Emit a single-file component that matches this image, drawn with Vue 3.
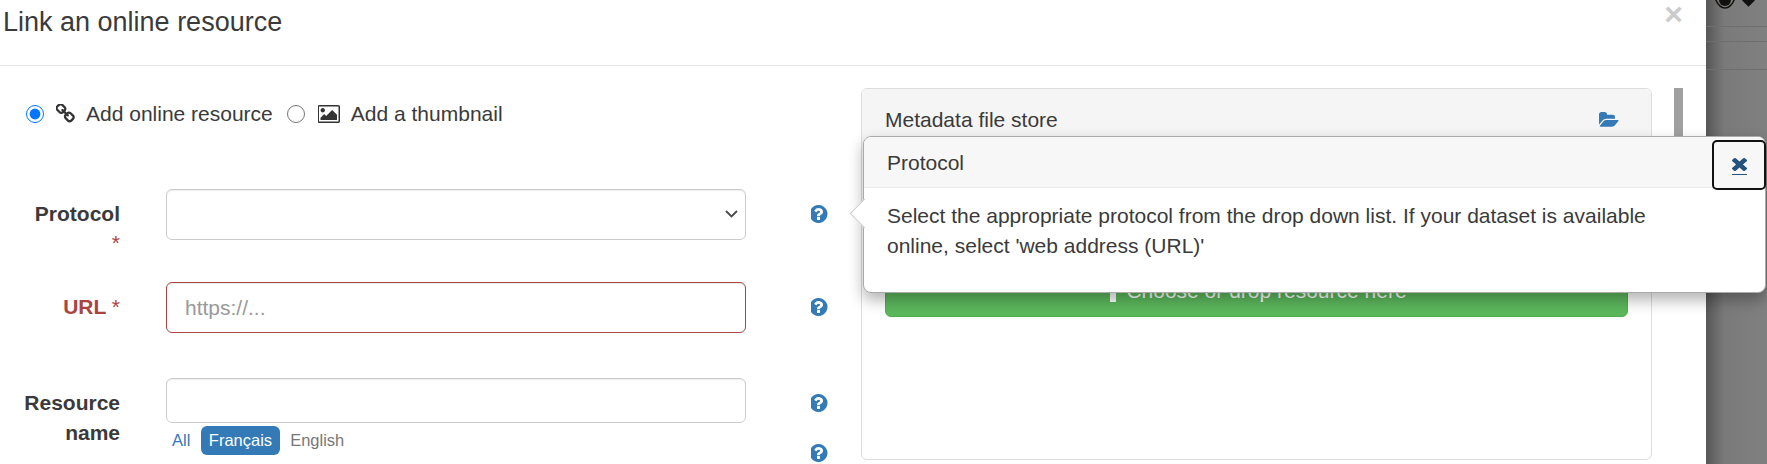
<script setup>
const help = "M896 1376v-192q0-14-9-23t-23-9h-192q-14 0-23 9t-9 23v192q0 14 9 23t23 9h192q14 0 23-9t9-23zm256-672q0-88-55.5-163t-138.5-116-170-41q-243 0-371 213-15 24 8 42l132 100q7 6 19 6 16 0 25-12 53-68 86-92 34-24 86-24 48 0 85.5 26t37.5 59q0 38-20 61t-68 45q-63 28-115.5 86.5t-52.5 125.5v36q0 14 9 23t23 9h192q14 0 23-9t9-23q0-19 21.5-49.5t54.5-49.5q32-18 49-28.5t46-35 44.5-48 28-60.5 12.5-81zm384 192q0 209-103 385.5t-279.5 279.5-385.5 103-385.5-103-279.5-279.5-103-385.5 103-385.5 279.5-279.5 385.5-103 385.5 103 279.5 279.5 103 385.5z"
</script>

<template>
  <div class="page">
    <div class="modal">
      <header class="head">
        <h4 class="title">Link an online resource</h4>
        <span class="close">×</span>
      </header>
      <div class="body">
        <div class="left">
          <div class="kinds">
            <input class="radio" type="radio" name="kind" checked />
            <svg class="i-link" viewBox="128 128 1600 1540"><path d="M1520 1216q0-40-28-68l-208-208q-28-28-68-28-42 0-72 32 3 3 19 18.5t21.5 21.5 15 19 13 25.5 3.5 27.5q0 40-28 68t-68 28q-15 0-27.5-3.5t-25.5-13-19-15-21.5-21.5-18.5-19q-33 31-33 73 0 40 28 68l206 207q27 27 68 27 40 0 68-26l147-146q28-28 28-67zm-703-705q0-40-28-68l-206-207q-28-28-68-28-39 0-68 27l-147 146q-28 28-28 67 0 40 28 68l208 208q27 27 68 27 42 0 72-31-3-3-19-18.5t-21.5-21.5-15-19-13-25.5-3.5-27.5q0-40 28-68t68-28q15 0 27.5 3.5t25.5 13 19 15 21.5 21.5 18.5 19q33-31 33-73zm895 705q0 120-85 203l-147 146q-83 83-203 83-121 0-204-85l-206-207q-83-83-83-203 0-123 88-209l-88-88q-86 88-208 88-120 0-204-84l-208-208q-84-84-84-204t85-203l147-146q83-83 203-83 121 0 204 85l206 207q83 83 83 203 0 123-88 209l88 88q86-88 208-88 120 0 204 84l208 208q84 84 84 204z" /></svg>
            <span class="kind-text">Add online resource</span>
            <input class="radio radio-2" type="radio" name="kind" />
            <svg class="i-pic" viewBox="0 128 1920 1536"><path d="M576 576q0 80-56 136t-136 56-136-56-56-136 56-136 136-56 136 56 56 136zm1024 384v448h-1408v-192l320-320 160 160 512-512zm96-704h-1600q-13 0-22.5 9.5t-9.5 22.5v1216q0 13 9.5 22.5t22.5 9.5h1600q13 0 22.5-9.5t9.5-22.5v-1216q0-13-9.5-22.5t-22.5-9.5zm160 32v1216q0 66-47 113t-113 47h-1600q-66 0-113-47t-47-113v-1216q0-66 47-113t113-47h1600q66 0 113 47t47 113z" /></svg>
            <span class="kind-text">Add a thumbnail</span>
          </div>

          <div class="row row-protocol">
            <label class="label">Protocol <span class="req">*</span></label>
            <div class="control control-select">
              <select class="input input-select"><option></option></select>
              <svg class="chevron" viewBox="0 0 13 8"><path d="M1 1l5.500 5.500L12 1" /></svg>
            </div>
            <div class="helps"><svg class="i-help" viewBox="128 128 1536 1536"><path :d="help" /></svg></div>
          </div>

          <div class="row row-url">
            <label class="label invalid">URL <span class="req">*</span></label>
            <div class="control">
              <input class="input input-invalid" type="text" placeholder="https://..." />
            </div>
            <div class="helps"><svg class="i-help" viewBox="128 128 1536 1536"><path :d="help" /></svg></div>
          </div>

          <div class="row row-name">
            <label class="label label-name">Resource name</label>
            <div class="control">
              <input class="input input-short" type="text" />
              <div class="langs">
                <span class="lang lang-all">All</span>
                <span class="lang lang-on">Français</span>
                <span class="lang lang-off">English</span>
              </div>
            </div>
            <div class="helps">
              <svg class="i-help" viewBox="128 128 1536 1536"><path :d="help" /></svg>
              <svg class="i-help" viewBox="128 128 1536 1536"><path :d="help" /></svg>
            </div>
          </div>
        </div>

        <section class="panel">
          <div class="panel-head">
            <span>Metadata file store</span>
            <svg class="i-folder" viewBox="0 128 1920 1536"><path d="M1879 952q0 31-31 66l-336 396q-43 51-120.5 86.5t-143.5 35.5h-1088q-34 0-60.5-13t-26.5-43q0-31 31-66l336-396q43-51 120.5-86.5t143.5-35.5h1088q34 0 60.5 13t26.5 43zm-343-344v160h-832q-94 0-197 47.5t-164 119.5l-337 396-5 6q0-4-.5-12.5t-.5-12.5v-960q0-92 66-158t158-66h320q92 0 158 66t66 158v32h544q92 0 158 66t66 158z" /></svg>
          </div>
          <div class="panel-body">
            <div class="upload">
              <svg class="i-up" viewBox="0 0 14 24"><path d="M7 0l7 9H10v15H4V9H0z" /></svg>
              <span>Choose or drop resource here</span>
            </div>
          </div>
        </section>

        <div class="scroll"></div>
      </div>
    </div>

    <div class="backdrop">
      <div class="bd-row bd-first">
        <svg class="i-eye" viewBox="0 0 20 18"><path d="M.8 9C3.500 3 6.500 1 10 1s6.500 2 9.200 8c-2.700 6-5.700 8-9.200 8S3.500 15 .8 9z" fill="none" stroke="#15110c" stroke-width="1.500" /><circle cx="10" cy="9" r="6" fill="#111" /></svg>
        <span class="diamond"></span>
      </div>
      <div class="bd-row bd-second"></div>
      <div class="bd-row bd-third"></div>
    </div>

    <aside class="popover">
      <span class="arrow"></span>
      <div class="pop-head">Protocol</div>
      <div class="pop-body">Select the appropriate protocol from the drop down list. If your dataset is available online, select 'web address (URL)'</div>
      <a class="pop-close">
        <svg class="i-x" viewBox="110 356 1188 1188" preserveAspectRatio="none"><path d="M1298 1312q0 40-28 68l-136 136q-28 28-68 28t-68-28l-294-294-294 294q-28 28-68 28t-68-28l-136-136q-28-28-28-68t28-68l294-294-294-294q-28-28-28-68t28-68l136-136q28-28 68-28t68 28l294 294 294-294q28-28 68-28t68 28l136 136q28 28 28 68t-28 68l-294 294 294 294q28 28 28 68z" /></svg>
      </a>
    </aside>
  </div>
</template>

<style>
html, body { margin: 0; background: #fff; overflow: hidden; }
</style>

<style scoped>
.page {
  position: relative;
  display: flex;
  width: 1767px;
  height: 464px;
  overflow: hidden;
  font-family: "Liberation Sans", Arial, sans-serif;
  font-size: 21px;
  line-height: 30px;
  color: #3a3a3a;
}
.modal { width: 1706px; flex: none; background: #fff; }
.head {
  display: flex;
  justify-content: space-between;
  align-items: flex-start;
  height: 65px;
  padding: 0 23px 0 3px;
  border-bottom: 1px solid #e5e5e5;
}
.title { margin: 0; font-size: 27px; font-weight: 400; line-height: 44px; }
.close {
  font-size: 32px;
  font-weight: 700;
  line-height: 28px;
  color: #000;
  opacity: 0.2;
}
.body { display: flex; align-items: flex-start; padding-top: 22px; }
.left { width: 861px; flex: none; }
.kinds { display: flex; align-items: center; height: 30px; margin: 11px 0 60px 26px; }
.radio { width: 18px; height: 18px; margin: 0; accent-color: #0075ff; flex: none; }
.radio-2 { margin-left: 14px; }
.i-link { width: 19px; height: 19px; margin: -2px 11px 0 12px; fill: #333; flex: none; }
.i-pic { width: 23px; height: 18px; margin: 0 10px 0 13px; fill: #333; flex: none; }
.kind-text { white-space: nowrap; }

.row { display: flex; align-items: flex-start; }
.row-protocol { height: 51px; margin-bottom: 42px; }
.row-url { height: 51px; margin-bottom: 45px; }
.label {
  width: 96px;
  margin: 0 46px 0 24px;
  padding-top: 10px;
  text-align: right;
  font-weight: 700;
  line-height: 29px;
  flex: none;
}
.label-name { line-height: 30px; }
.req { color: #a94442; font-weight: 400; }
.invalid { color: #a94442; }
.control { width: 580px; flex: none; }
.control-select { position: relative; }
.input {
  display: block;
  box-sizing: border-box;
  width: 100%;
  height: 51px;
  padding: 1px 18px 0;
  font: inherit;
  color: #555;
  background: #fff;
  border: 1px solid #ccc;
  border-radius: 6px;
  box-shadow: inset 0 1px 1px rgba(0, 0, 0, 0.075);
  outline: none;
}
.input-select { appearance: none; }
.chevron {
  position: absolute;
  right: 8px;
  top: 21px;
  width: 13px;
  height: 8px;
  fill: none;
  stroke: #4a4a4a;
  stroke-width: 1.800;
}
.input::placeholder { color: #999; opacity: 1; }
.input-invalid { border-color: #a94442; }
.input-short { height: 45px; }
.langs { display: flex; gap: 3px; margin-top: 3px; font-size: 16.500px; line-height: 29px; }
.lang { padding: 0 7.500px; border-radius: 6px; }
.lang-all { color: #337ab7; padding: 0 6px; margin-right: 2px; }
.lang-on { background: #337ab7; color: #fff; }
.lang-off { color: #777; }
.helps { display: flex; flex-direction: column; gap: 32px; margin-left: 65px; padding-top: 16px; }
.i-help { display: block; width: 18px; height: 18px; fill: #337ab7; }

.panel {
  box-sizing: border-box;
  width: 791px;
  height: 372px;
  flex: none;
  border: 1px solid #ddd;
  border-radius: 6px;
  overflow: hidden;
}
.panel-head {
  display: flex;
  justify-content: space-between;
  align-items: center;
  height: 62px;
  padding: 0 32px 0 23px;
  background: #f5f5f5;
  box-sizing: border-box;
}
.i-folder { width: 20px; height: 16px; fill: #337ab7; }
.panel-body { padding: 115px 23px 0; }
.upload {
  box-sizing: border-box;
  display: flex;
  justify-content: center;
  align-items: flex-end;
  gap: 6px;
  height: 51px;
  padding-bottom: 10px;
  color: #fff;
  background: #5cb85c;
  border: 1px solid #4cae4c;
  border-radius: 6px;
}
.i-up { width: 14px; height: 24px; margin-bottom: 4px; fill: #fff; }
.scroll { width: 9px; height: 62px; margin-left: 22px; background: #a0a0a0; flex: none; }

.backdrop {
  flex: 1;
  background: linear-gradient(90deg, #565656 0, #7a7a7a 18px, #808080 100%);
}
.bd-row { border-bottom: 1px solid #6e6e6e; box-sizing: border-box; }
.bd-first {
  display: flex;
  align-items: flex-start;
  height: 27px;
  overflow: hidden;
  padding: 0 0 0 9px;
}
.bd-second { height: 15px; }
.bd-third { height: 28px; }
.i-eye { margin-top: -9px; width: 20px; height: 18px; flex: none; }
.diamond {
  width: 9px;
  height: 9px;
  margin: -4px 0 0 9px;
  background: #111;
  transform: rotate(45deg);
}

.popover {
  position: absolute;
  left: 863px;
  top: 136px;
  box-sizing: border-box;
  width: 903px;
  height: 157px;
  background: #fff;
  border: 1px solid #aaa;
  border-radius: 8px;
  box-shadow: 0 7px 15px rgba(0, 0, 0, 0.3);
}
.arrow {
  position: absolute;
  left: -10px;
  top: 66px;
  width: 20px;
  height: 20px;
  background: #fff;
  border-left: 1px solid #ccc;
  border-bottom: 1px solid #ccc;
  transform: rotate(45deg);
}
.pop-head {
  position: relative;
  box-sizing: border-box;
  height: 51px;
  padding: 11px 23px 0;
  background: #f7f7f7;
  border-bottom: 1px solid #ebebeb;
  border-radius: 7px 7px 0 0;
}
.pop-body { position: relative; width: 800px; padding: 13px 0 0 23px; box-sizing: border-box; }
.pop-close {
  position: absolute;
  top: 3px;
  right: -1px;
  box-sizing: border-box;
  display: flex;
  flex-direction: column;
  align-items: center;
  justify-content: center;
  width: 54px;
  height: 50px;
  padding-top: 2px;
  background: #f7f7f7;
  border: 2px solid #111;
  border-radius: 5px;
}
.i-x {
  box-sizing: content-box;
  width: 15px;
  height: 13px;
  padding-bottom: 3px;
  border-bottom: 1.500px solid #23527c;
  fill: #23527c;
}
</style>
